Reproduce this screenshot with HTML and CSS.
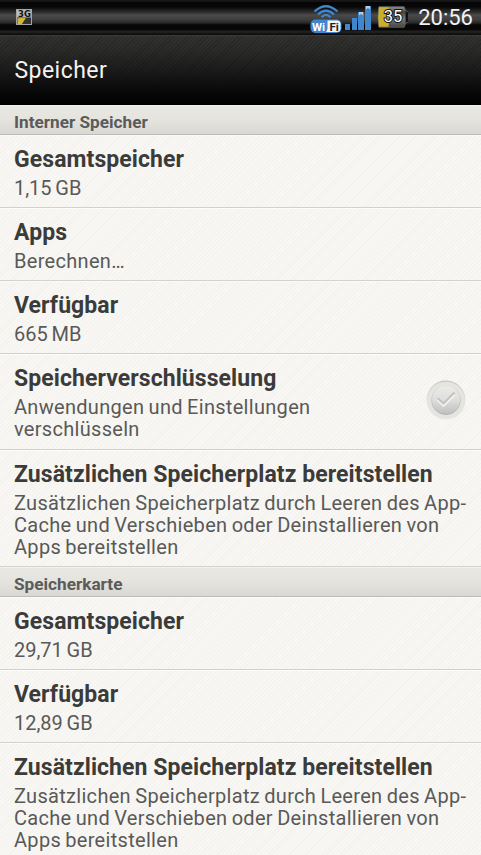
FILE: index.html
```html
<!DOCTYPE html>
<html lang="de">
<head>
    <meta charset="UTF-8">
    <title>Speicher</title>
    <link rel="stylesheet" href="styles.css">
</head>
<body>
    <div class="statusbar">
        <svg class="icon-3g" width="17" height="17" viewBox="0 0 17 17">
            <rect x="0.5" y="0.5" width="15" height="15" fill="#777" stroke="#a5a5a5"/>
            <rect x="1" y="1" width="14" height="7" fill="#bdbdbd"/>
            <text x="8.5" y="7.500" text-anchor="middle" class="label-3g">3G</text>
            <path d="M2 10l2-1h6l-4 6H2z" fill="#d2b82a"/>
            <path d="M10 9h5v6H6z" fill="#333"/>
        </svg>
        <div class="status-right">
            <svg width="32" height="29" viewBox="0 0 32 29">
                <g fill="none" stroke="#3f86cf" stroke-width="2.2">
                    <path d="M4.500 6.500Q16-4 27.500 6.500"/>
                    <path d="M8 9.500Q16 2 24 9.500"/>
                    <path d="M11.500 12.200Q16 7.500 20.500 12.200"/>
                </g>
                <rect x="0.500" y="14.500" width="31" height="13.500" rx="5" fill="#3f86cf"/>
                <path d="M17.500 15.500H27q3.500 0 3.500 3.500v4.500q0 3.500-3.500 3.500H16q1.500-1.500 1.500-4z" fill="#f4f4f4"/>
                <text x="2" y="25.500" class="label-wifi" fill="#fff">Wi</text>
                <text x="19.500" y="25.500" class="label-wifi" fill="#222">Fi</text>
            </svg>
            <svg width="26" height="26" viewBox="0 0 26 26" fill="#3f86cf">
                <rect x="0" y="18" width="5" height="6"/>
                <rect x="7" y="12" width="5" height="12"/>
                <rect x="13" y="6" width="6" height="18"/>
                <rect x="20" y="0" width="6" height="24"/>
                <path d="M14 6h4v3h-1l-1-1.500-1 1.500h-1zM21 0h4v3h-1l-1-1.500-1 1.500h-1z" fill="#bcd"/>
            </svg>
            <svg width="32" height="22" viewBox="0 0 33 22">
                <defs>
                    <linearGradient id="cell" x1="0" y1="0" x2="0" y2="1">
                        <stop offset="0" stop-color="#999"/>
                        <stop offset="0.25" stop-color="#444"/>
                        <stop offset="0.6" stop-color="#777"/>
                        <stop offset="1" stop-color="#444"/>
                    </linearGradient>
                </defs>
                <path d="M2 0.500h26l1.500 4 2 1v11l-2 1-1.500 4H2Q0 11 2 0.500z" fill="url(#cell)" stroke="#606060"/>
                <path d="M29.500 5l2.500 1v10l-2.500 1z" fill="#111"/>
                <path d="M2 1h10v20H2Q0.500 11 2 1z" fill="#c9b02a"/>
                <text x="16.500" y="16.500" text-anchor="middle" class="label-battery">35</text>
            </svg>
            <span class="clock">20:56</span>
        </div>
    </div>

    <div class="titlebar"><h1>Speicher</h1></div>

    <h2>Interner Speicher</h2>
    <ul class="list">
        <li><h3>Gesamtspeicher</h3><p class="size">1,15 GB</p></li>
        <li><h3>Apps</h3><p>Berechnen…</p></li>
        <li><h3>Verfügbar</h3><p class="size">665 MB</p></li>
        <li class="with-check">
            <div>
                <h3>Speicherverschlüsselung</h3>
                <p>Anwendungen und Einstellungen<br>verschlüsseln</p>
            </div>
            <svg class="check" width="40" height="40" viewBox="0 0 40 40">
                <defs>
                    <linearGradient id="knob" x1="0" y1="0" x2="0" y2="1">
                        <stop offset="0" stop-color="#ebebe9"/>
                        <stop offset="0.5" stop-color="#dededd"/>
                        <stop offset="1" stop-color="#bebebe"/>
                    </linearGradient>
                    <linearGradient id="rim" x1="0" y1="0" x2="0" y2="1">
                        <stop offset="0" stop-color="#bcbcba"/>
                        <stop offset="0.5" stop-color="#e3e2dd"/>
                        <stop offset="1" stop-color="#e8e6e0"/>
                    </linearGradient>
                    <linearGradient id="edge" x1="0" y1="0" x2="0" y2="1">
                        <stop offset="0" stop-color="#e2e2e0"/>
                        <stop offset="1" stop-color="#b2b2b2"/>
                    </linearGradient>
                </defs>
                <circle cx="20" cy="20" r="19" fill="#e6e4df" stroke="url(#rim)" stroke-width="1"/>
                <circle cx="20" cy="20" r="14.500" fill="url(#knob)" stroke="url(#edge)"/>
                <path d="M11.500 19.500l6 6L28.500 14.500" fill="none" stroke="#f3f3f1" stroke-width="2.500"/>
                <path d="M11.500 18l6 5.500L28.500 12.500" fill="none" stroke="#c4c4c2" stroke-width="2"/>
            </svg>
        </li>
        <li>
            <h3>Zusätzlichen Speicherplatz bereitstellen</h3>
            <p>Zusätzlichen Speicherplatz durch Leeren des App-<br>Cache und Verschieben oder Deinstallieren von<br>Apps bereitstellen</p>
        </li>
    </ul>

    <h2>Speicherkarte</h2>
    <ul class="list">
        <li><h3>Gesamtspeicher</h3><p class="size">29,71 GB</p></li>
        <li><h3>Verfügbar</h3><p class="size">12,89 GB</p></li>
        <li>
            <h3>Zusätzlichen Speicherplatz bereitstellen</h3>
            <p>Zusätzlichen Speicherplatz durch Leeren des App-<br>Cache und Verschieben oder Deinstallieren von<br>Apps bereitstellen</p>
        </li>
    </ul>
</body>
</html>
```
FILE: styles.css
```css
* {
    box-sizing: border-box;
}

html {
    height: 855px;
    overflow: hidden;
}

body {
    margin: 0;
    height: 855px;
    overflow: hidden;
    font-family: Roboto, "Liberation Sans", sans-serif;
    white-space: nowrap;
    background: #f6f5f1;
}

h1, h2, h3, p, ul {
    margin: 0;
    padding: 0;
}

/* Status bar */
.statusbar {
    height: 35px;
    display: flex;
    justify-content: space-between;
    align-items: flex-start;
    padding: 0 8px 0 16px;
    background: linear-gradient(#050505, #262626 1px, #050505 2px, #080808 7px, #2c2c2c 12px, #4a4a4a 15px, #3c3c3c 20px, #262626 23px, #060606 25px, #080808 30px, #222 31px, #1c1c1c 33px, #050505 35px);
}

.icon-3g {
    margin-top: 9px;
}

.label-3g {
    font: bold 8.5px "DejaVu Sans", sans-serif;
    fill: #111;
}

.status-right {
    display: flex;
    align-items: flex-start;
    padding-top: 6px;
}

.status-right svg:nth-child(1) {
    margin-top: -1px;
    margin-right: 3px;
}

.status-right svg:nth-child(3) {
    margin-left: 6px;
}

.label-wifi {
    font: 700 11.5px Roboto, sans-serif;
}

.label-battery {
    font: 17px Roboto, sans-serif;
    fill: #fff;
    stroke: #111;
    stroke-width: 2px;
    paint-order: stroke;
}

.clock {
    margin-left: 9px;
    font-size: 22px;
    line-height: 23px;
    color: #f2f2f2;
}

/* Title bar */
.titlebar {
    height: 70px;
    padding-left: 14.5px;
    background:
        repeating-linear-gradient(135deg, rgba(0,0,0,.15) 0 1px, transparent 1px 3px),
        linear-gradient(#323230, #2b2b2a 14px, #1a1a1a 36px, #080808 56px, #020202);
    border-top: 1px solid #3c3c3a;
    border-bottom: 1px solid #000;
}

h1 {
    font-size: 23px;
    font-weight: 400;
    line-height: 70px;
    letter-spacing: 0.45px;
    color: #f3f3f0;
}

/* Section headings */
h2 {
    height: 30px;
    padding-left: 14px;
    font-size: 17.2px;
    font-weight: 700;
    line-height: 32px;
    color: #5b5b5a;
    background: linear-gradient(#eae8e3, #e5e3de 50%, #d9d8d4);
    border-top: 1px solid #f4f3ee;
    border-bottom: 1px solid #bababa;
}

/* Preference rows */
.list {
    list-style: none;
}

li {
    padding: 9px 14px 8px;
    border-top: 1px solid #fcfcfa;
    border-bottom: 1px solid #d2d1cf;
    background: repeating-linear-gradient(135deg, #f3f2ee 0 1px, #f8f7f4 1px 3px);
}

h3 {
    height: 32px;
    font-size: 23px;
    font-weight: 700;
    line-height: 30px;
    letter-spacing: 0.08px;
    color: #3b3b3a;
}

p {
    font-size: 20px;
    line-height: 22px;
    letter-spacing: 0.3px;
    word-spacing: -1px;
    color: #595958;
}

.size {
    letter-spacing: -0.05px;
}

.with-check {
    display: flex;
    justify-content: space-between;
    align-items: center;
    padding-bottom: 9px;
}

.check {
    margin: -5px 1px 0 0;
}
```
